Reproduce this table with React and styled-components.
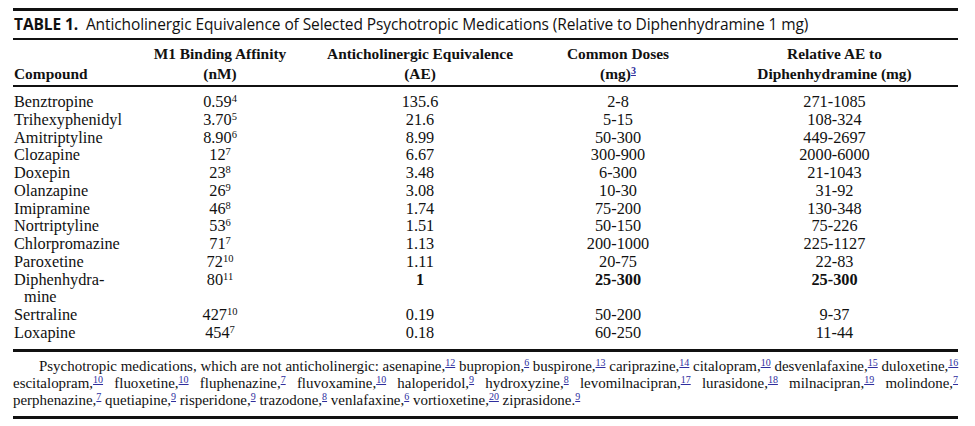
import React from 'react';
import styled, { createGlobalStyle } from 'styled-components';

const GlobalStyle = createGlobalStyle`
  body {
    margin: 0;
    background: #fff;
    color: #111;
  }
`;

const rows = [
  { name: 'Benztropine', m1: '0.59', ref: '4', ae: '135.6', dose: '2-8', rel: '271-1085' },
  { name: 'Trihexyphenidyl', m1: '3.70', ref: '5', ae: '21.6', dose: '5-15', rel: '108-324' },
  { name: 'Amitriptyline', m1: '8.90', ref: '6', ae: '8.99', dose: '50-300', rel: '449-2697' },
  { name: 'Clozapine', m1: '12', ref: '7', ae: '6.67', dose: '300-900', rel: '2000-6000' },
  { name: 'Doxepin', m1: '23', ref: '8', ae: '3.48', dose: '6-300', rel: '21-1043' },
  { name: 'Olanzapine', m1: '26', ref: '9', ae: '3.08', dose: '10-30', rel: '31-92' },
  { name: 'Imipramine', m1: '46', ref: '8', ae: '1.74', dose: '75-200', rel: '130-348' },
  { name: 'Nortriptyline', m1: '53', ref: '6', ae: '1.51', dose: '50-150', rel: '75-226' },
  { name: 'Chlorpromazine', m1: '71', ref: '7', ae: '1.13', dose: '200-1000', rel: '225-1127' },
  { name: 'Paroxetine', m1: '72', ref: '10', ae: '1.11', dose: '20-75', rel: '22-83' },
  { name: ['Diphenhydra-', 'mine'], m1: '80', ref: '11', ae: '1', dose: '25-300', rel: '25-300', bold: true },
  { name: 'Sertraline', m1: '427', ref: '10', ae: '0.19', dose: '50-200', rel: '9-37' },
  { name: 'Loxapine', m1: '454', ref: '7', ae: '0.18', dose: '60-250', rel: '11-44' },
];

const footLines = [
  [
    ['Psychotropic medications, which are not anticholinergic: asenapine,', '12'],
    [' bupropion,', '6'],
    [' buspirone,', '13'],
    [' cariprazine,', '14'],
    [' citalopram,', '10'],
    [' desvenlafaxine,', '15'],
    [' duloxetine,', '16'],
  ],
  [
    ['escitalopram,', '10'],
    [' fluoxetine,', '10'],
    [' fluphenazine,', '7'],
    [' fluvoxamine,', '10'],
    [' haloperidol,', '9'],
    [' hydroxyzine,', '8'],
    [' levomilnacipran,', '17'],
    [' lurasidone,', '18'],
    [' milnacipran,', '19'],
    [' molindone,', '7'],
  ],
  [
    ['perphenazine,', '7'],
    [' quetiapine,', '9'],
    [' risperidone,', '9'],
    [' trazodone,', '8'],
    [' venlafaxine,', '6'],
    [' vortioxetine,', '20'],
    [' ziprasidone.', '9'],
  ],
];

const App = () => {
  return (
    <>
      <GlobalStyle />
      <Wrapper>
        <Title>
          <TitleLabel>TABLE 1.</TitleLabel>&nbsp; Anticholinergic Equivalence of Selected
          Psychotropic Medications (Relative to Diphenhydramine 1 mg)
        </Title>
        <Table>
          <colgroup>
            <col style={{ width: 112 }} />
            <col style={{ width: 190 }} />
            <col style={{ width: 210 }} />
            <col style={{ width: 186 }} />
            <col style={{ width: 247 }} />
          </colgroup>
          <thead>
            <tr>
              <Th $left>Compound</Th>
              <Th>
                M1 Binding Affinity
                <br />
                (nM)
              </Th>
              <Th>
                Anticholinergic Equivalence
                <br />
                (AE)
              </Th>
              <Th>
                Common Doses
                <br />
                (mg)<Ref $bold>3</Ref>
              </Th>
              <Th>
                Relative AE to
                <br />
                Diphenhydramine (mg)
              </Th>
            </tr>
          </thead>
          <tbody>
            {rows.map((r, i) => (
              <Row key={i}>
                <NameCell>
                  {Array.isArray(r.name) ? (
                    <>
                      {r.name[0]}
                      <br />
                      <Wrapped>{r.name[1]}</Wrapped>
                    </>
                  ) : (
                    r.name
                  )}
                </NameCell>
                <Td>
                  {r.m1}
                  <Sup>{r.ref}</Sup>
                </Td>
                <Td $bold={r.bold}>{r.ae}</Td>
                <Td $bold={r.bold}>{r.dose}</Td>
                <Td $bold={r.bold}>{r.rel}</Td>
              </Row>
            ))}
          </tbody>
        </Table>
        <Footnote>
          {footLines.map((line, i) => (
            <FootLine key={i} $first={i === 0} $last={i === footLines.length - 1}>
              {line.map(([text, ref], j) => (
                <React.Fragment key={j}>
                  {text}
                  <Ref>{ref}</Ref>
                </React.Fragment>
              ))}
            </FootLine>
          ))}
        </Footnote>
      </Wrapper>
    </>
  );
};

export default App;

const Wrapper = styled.div`
  width: 945px;
  margin: 8px 0 0 13px;
  font-family: 'Liberation Serif', 'Times New Roman', serif;
`;

const Title = styled.div`
  border-top: 3px solid #111;
  border-bottom: 2px solid #111;
  height: 27px;
  line-height: 27px;
  font-family: 'Open Sans', 'Noto Sans', sans-serif;
  font-size: 15.5px;
  letter-spacing: -0.1px;
  white-space: nowrap;
  padding-left: 1px;
`;

const TitleLabel = styled.span`
  font-weight: bold;
`;

const Table = styled.table`
  width: 945px;
  table-layout: fixed;
  border-collapse: separate;
  border-spacing: 0;
  border-bottom: 3px solid #111;
`;

const Th = styled.th`
  font-weight: bold;
  font-size: 15.4px;
  line-height: 20px;
  padding: 4px 0 1px;
  text-align: ${(p) => (p.$left ? 'left' : 'center')};
  vertical-align: bottom;
  border-bottom: 2px solid #111;
  padding-left: ${(p) => (p.$left ? '1px' : '0')};
`;

const Row = styled.tr`
  &:first-child td {
    padding-top: 6px;
  }
  &:last-child td {
    padding-bottom: 7px;
  }
`;

const Td = styled.td`
  font-size: 16.3px;
  line-height: 17.77px;
  padding: 0;
  text-align: center;
  vertical-align: top;
  font-weight: ${(p) => (p.$bold ? 'bold' : 'normal')};
  white-space: nowrap;
`;

const NameCell = styled(Td)`
  text-align: left;
  padding-left: 1px;
`;

const Wrapped = styled.span`
  padding-left: 10px;
`;

const Sup = styled.sup`
  font-size: 10.5px;
  line-height: 0;
  vertical-align: 5px;
`;

const Ref = styled.sup`
  font-size: 10px;
  line-height: 0;
  vertical-align: 5px;
  color: #2e2e9e;
  text-decoration: underline;
  font-weight: ${(p) => (p.$bold ? 'bold' : 'normal')};
`;

const Footnote = styled.div`
  border-bottom: 3px solid #111;
  padding: 6px 0 7px;
  font-size: 14.95px;
  line-height: 17.2px;
`;

const FootLine = styled.div`
  text-align: justify;
  text-align-last: ${(p) => (p.$last ? 'left' : 'justify')};
  text-indent: ${(p) => (p.$first ? '26px' : '0')};
  white-space: nowrap;
`;
